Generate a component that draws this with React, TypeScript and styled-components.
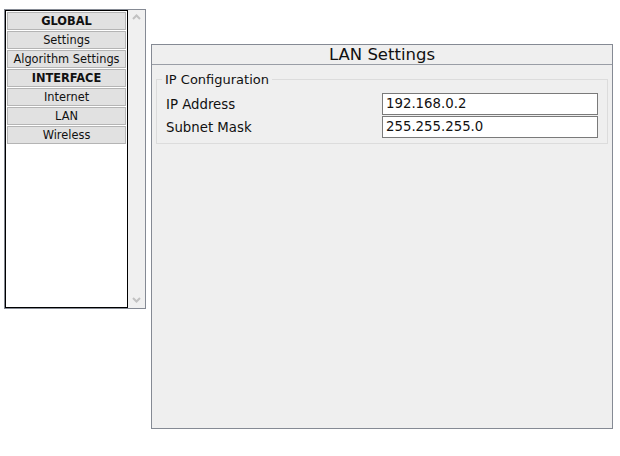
import React from 'react';
import styled, { createGlobalStyle } from 'styled-components';

const GlobalStyle = createGlobalStyle`
  html, body {
    margin: 0;
    padding: 0;
    background: #fff;
  }
  body {
    font-family: 'DejaVu Sans', Verdana, sans-serif;
    color: #000;
  }
`;

type NavItem = { label: string; header?: boolean };

const navItems: NavItem[] = [
  { label: 'GLOBAL', header: true },
  { label: 'Settings' },
  { label: 'Algorithm Settings' },
  { label: 'INTERFACE', header: true },
  { label: 'Internet' },
  { label: 'LAN' },
  { label: 'Wireless' },
];

const fields = [
  { label: 'IP Address', value: '192.168.0.2' },
  { label: 'Subnet Mask', value: '255.255.255.0' },
];

const Page = styled.div`
  display: flex;
  align-items: flex-start;
  padding-left: 4px;
  width: 620px;
  height: 456px;
  box-sizing: border-box;
`;

const Sidebar = styled.div`
  margin-top: 9px;
  width: 142px;
  height: 300px;
  box-sizing: border-box;
  border: 1px solid #858a94;
  display: flex;
`;

const NavList = styled.div`
  flex: 1;
  border: 1px solid #000;
  background: #fff;
  padding: 1px 1px;
  display: flex;
  flex-direction: column;
  gap: 1px;
`;

const NavButton = styled.div<{ $header?: boolean }>`
  height: 18px;
  box-sizing: border-box;
  background: #e1e1e1;
  border: 1px solid #b4b4b4;
  display: flex;
  align-items: center;
  justify-content: center;
  font-size: 11.4px;
  font-weight: ${(p) => (p.$header ? 'bold' : 'normal')};
  color: #111;
  white-space: nowrap;
`;

const ScrollTrack = styled.div`
  width: 17px;
  background: #f0f0f0;
  display: flex;
  flex-direction: column;
  justify-content: space-between;
  align-items: center;
  padding: 4px 0 5px;
  box-sizing: border-box;
`;

const Panel = styled.div`
  margin-top: 44px;
  margin-left: 5px;
  width: 462px;
  height: 385px;
  box-sizing: border-box;
  border: 1px solid #858a94;
  background: #efefef;
`;

const PanelTitle = styled.div`
  height: 19px;
  border-bottom: 1px solid #9a9ea6;
  text-align: center;
  font-size: 16.5px;
  line-height: 19px;
  color: #111;
`;

const Group = styled.fieldset`
  margin: 7px 4px 0 4px;
  padding: 0 9px 5px 9px;
  border: 1px solid #dcdcdc;
  border-radius: 0;
`;

const Legend = styled.legend`
  font-size: 13px;
  padding: 0 3px;
  margin-left: -4px;
  color: #111;
`;

const Fields = styled.div`
  display: flex;
  flex-direction: column;
  gap: 1px;
  margin-top: 6px;
`;

const FieldRow = styled.div`
  display: flex;
  align-items: center;
  height: 22px;
`;

const FieldLabel = styled.div`
  width: 216px;
  font-size: 13.3px;
  color: #111;
`;

const FieldInput = styled.div`
  width: 216px;
  height: 22px;
  box-sizing: border-box;
  border: 1px solid #7a7a7a;
  background: #fff;
  font-size: 13.3px;
  line-height: 20px;
  padding-left: 3px;
  color: #111;
`;

const Arrow = ({ up }: { up?: boolean }) => (
  <svg width="9" height="6" viewBox="0 0 9 6">
    <path
      d={up ? 'M1 5 L4.5 1.5 L8 5' : 'M1 1 L4.5 4.5 L8 1'}
      fill="none"
      stroke="#c2c2c2"
      strokeWidth="2"
    />
  </svg>
);

export default function App() {
  return (
    <>
      <GlobalStyle />
      <Page>
        <Sidebar>
          <NavList>
            {navItems.map((item) => (
              <NavButton key={item.label} $header={item.header}>
                {item.label}
              </NavButton>
            ))}
          </NavList>
          <ScrollTrack>
            <Arrow up />
            <Arrow />
          </ScrollTrack>
        </Sidebar>
        <Panel>
          <PanelTitle>LAN Settings</PanelTitle>
          <Group>
            <Legend>IP Configuration</Legend>
            <Fields>
              {fields.map((f) => (
                <FieldRow key={f.label}>
                  <FieldLabel>{f.label}</FieldLabel>
                  <FieldInput>{f.value}</FieldInput>
                </FieldRow>
              ))}
            </Fields>
          </Group>
        </Panel>
      </Page>
    </>
  );
}
